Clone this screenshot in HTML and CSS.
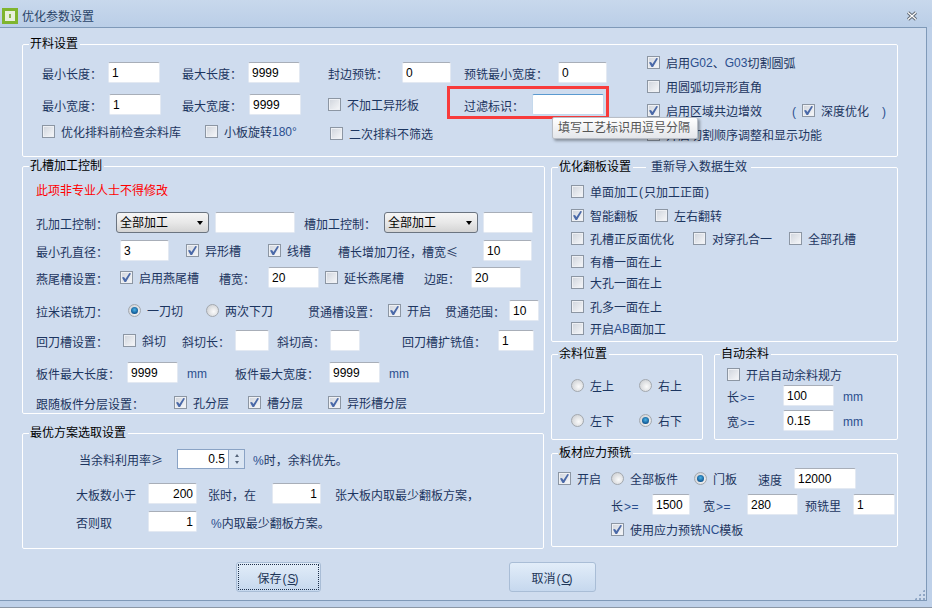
FILE: index.html
```html
<!DOCTYPE html>
<html>
<head>
	<meta charset="utf-8">
	<title>优化参数设置</title>
	<link rel="stylesheet" href="styles.css">
</head>
<body>
	<div class="titlebar">
		<svg class="app-icon" width="16" height="16" viewBox="0 0 16 16">
			<rect width="16" height="16" fill="#7fb52e"/>
			<rect x="3" y="3" width="10" height="10" fill="#e9f1dc"/>
			<rect x="7" y="6" width="2" height="4" fill="#8fb84a"/>
		</svg>
		<span class="title">优化参数设置</span>
		<svg class="close" width="12" height="10" viewBox="0 0 12 10">
			<path d="M2 1.5 L10 8.5 M10 1.5 L2 8.5" stroke="#5f6873" stroke-width="3.2"/>
			<path d="M2 1.5 L10 8.5 M10 1.5 L2 8.5" stroke="#fff" stroke-width="1.2"/>
		</svg>
	</div>

	<div class="main">
		<div class="group g-cut">
			<div class="legend">开料设置</div>
			<div class="cut-left">
				<div class="row cut-1">
					<span>最小长度：</span><input class="w52" value="1">
					<span>最大长度：</span><input class="w52" value="9999">
					<span>封边预铣：</span><input class="w49" value="0">
					<span>预铣最小宽度：</span><input class="w49" value="0">
				</div>
				<div class="row cut-2">
					<span>最小宽度：</span><input class="w52" value="1">
					<span>最大宽度：</span><input class="w52" value="9999">
					<label class="check"><i class="box"></i>不加工异形板</label>
					<span>过滤标识：</span><input class="w72 active">
				</div>
				<div class="row cut-3">
					<label class="check"><i class="box"></i>优化排料前检查余料库</label>
					<label class="check"><i class="box"></i>小板旋转<b class="num">180°</b></label>
					<label class="check nudge"><i class="box"></i>二次排料不筛选</label>
				</div>
			</div>
			<div class="cut-right">
				<div class="row"><label class="check"><i class="box on"></i>启用<b class="num">G02</b>、<b class="num">G03</b>切割圆弧</label></div>
				<div class="row"><label class="check"><i class="box"></i>用圆弧切异形直角</label></div>
				<div class="row cut-deep">
					<label class="check"><i class="box on"></i>启用区域共边增效</label>
					<span class="num">(</span>
					<label class="check"><i class="box on"></i>深度优化</label>
					<span class="num">)</span>
				</div>
				<div class="row"><label class="check"><i class="box"></i>开启切割顺序调整和显示功能</label></div>
			</div>
		</div>

		<div class="columns">
			<div class="col-left">
				<div class="group g-hole">
					<div class="legend">孔槽加工控制</div>
					<div class="row hole-0 warn">此项非专业人士不得修改</div>
					<div class="row hole-1">
						<span>孔加工控制：</span><div class="select w93">全部加工</div><input class="w80">
						<span>槽加工控制：</span><div class="select w94">全部加工</div><input class="w50">
					</div>
					<div class="row hole-2">
						<span>最小孔直径：</span><input class="w49" value="3">
						<label class="check"><i class="box on"></i>异形槽</label>
						<label class="check"><i class="box on"></i>线槽</label>
						<span>槽长增加刀径，槽宽<b class="cjk">≤</b></span><input class="w49" value="10">
					</div>
					<div class="row hole-3">
						<span>燕尾槽设置：</span>
						<label class="check"><i class="box on"></i>启用燕尾槽</label>
						<span>槽宽：</span><input class="w51" value="20">
						<label class="check"><i class="box"></i>延长燕尾槽</label>
						<span>边距：</span><input class="w50" value="20">
					</div>
					<div class="row hole-4">
						<span>拉米诺铣刀：</span>
						<label class="check"><i class="radio on"></i>一刀切</label>
						<label class="check"><i class="radio"></i>两次下刀</label>
						<span>贯通槽设置：</span>
						<label class="check"><i class="box on"></i>开启</label>
						<span>贯通范围：</span><input class="w30" value="10">
					</div>
					<div class="row hole-5">
						<span>回刀槽设置：</span>
						<label class="check"><i class="box"></i>斜切</label>
						<span>斜切长：</span><input class="w34">
						<span>斜切高：</span><input class="w30">
						<span>回刀槽扩铣值：</span><input class="w36" value="1">
					</div>
					<div class="row hole-6">
						<span>板件最大长度：</span><input class="w51" value="9999"><span class="num">mm</span>
						<span>板件最大宽度：</span><input class="w51" value="9999"><span class="num">mm</span>
					</div>
					<div class="row hole-7">
						<span>跟随板件分层设置：</span>
						<label class="check"><i class="box on"></i>孔分层</label>
						<label class="check"><i class="box on"></i>槽分层</label>
						<label class="check"><i class="box on"></i>异形槽分层</label>
					</div>
				</div>

				<div class="group g-best">
					<div class="legend">最优方案选取设置</div>
					<div class="row best-1">
						<span>当余料利用率<b class="cjk">≥</b></span>
						<div class="spin"><input value="0.5"><div class="spin-btn"><i class="up"></i><i class="down"></i></div></div>
						<span><b class="num">%</b>时，余料优先。</span>
					</div>
					<div class="row best-2">
						<span>大板数小于</span><input class="w49 right" value="200">
						<span>张时，在</span><input class="w49 right" value="1">
						<span>张大板内取最少翻板方案，</span>
					</div>
					<div class="row best-3">
						<span>否则取</span><input class="w49 right" value="1">
						<span><b class="num">%</b>内取最少翻板方案。</span>
					</div>
				</div>
			</div>

			<div class="col-right">
				<div class="group g-flip">
					<div class="legend">优化翻板设置</div>
					<div class="legend legend-note">重新导入数据生效</div>
					<div class="row flip-1"><label class="check"><i class="box"></i>单面加工<b class="half">(</b>只加工正面<b class="half">)</b></label></div>
					<div class="row flip-2">
						<label class="check"><i class="box on"></i>智能翻板</label>
						<label class="check"><i class="box"></i>左右翻转</label>
					</div>
					<div class="row flip-3">
						<label class="check"><i class="box"></i>孔槽正反面优化</label>
						<label class="check"><i class="box"></i>对穿孔合一</label>
						<label class="check"><i class="box"></i>全部孔槽</label>
					</div>
					<div class="row flip-4"><label class="check"><i class="box"></i>有槽一面在上</label></div>
					<div class="row flip-5"><label class="check"><i class="box"></i>大孔一面在上</label></div>
					<div class="row flip-6"><label class="check"><i class="box"></i>孔多一面在上</label></div>
					<div class="row flip-7"><label class="check"><i class="box"></i>开启<b class="num">AB</b>面加工</label></div>
				</div>

				<div class="pair">
					<div class="group g-pos">
						<div class="legend">余料位置</div>
						<div class="row pos-1">
							<label class="check"><i class="radio"></i>左上</label>
							<label class="check"><i class="radio"></i>右上</label>
						</div>
						<div class="row pos-2">
							<label class="check"><i class="radio"></i>左下</label>
							<label class="check"><i class="radio on"></i>右下</label>
						</div>
					</div>
					<div class="group g-auto">
						<div class="legend">自动余料</div>
						<div class="row auto-1"><label class="check"><i class="box"></i>开启自动余料规方</label></div>
						<div class="row auto-2">
							<span>长<b class="num ge">&gt;=</b></span><input class="w51" value="100"><span class="num">mm</span>
						</div>
						<div class="row auto-3">
							<span>宽<b class="num ge">&gt;=</b></span><input class="w51" value="0.15"><span class="num">mm</span>
						</div>
					</div>
				</div>

				<div class="group g-stress">
					<div class="legend">板材应力预铣</div>
					<div class="row stress-1">
						<label class="check"><i class="box on"></i>开启</label>
						<label class="check"><i class="radio"></i>全部板件</label>
						<label class="check"><i class="radio on"></i>门板</label>
						<span>速度</span><input class="w62" value="12000">
					</div>
					<div class="row stress-2">
						<span>长<b class="num ge">&gt;=</b></span><input class="w38" value="1500">
						<span>宽<b class="num ge">&gt;=</b></span><input class="w51" value="280">
						<span>预铣里</span><input class="w42" value="1">
					</div>
					<div class="row stress-3"><label class="check"><i class="box on"></i>使用应力预铣<b class="num">NC</b>模板</label></div>
				</div>
			</div>
		</div>

		<div class="footer">
			<button class="focused">保存<b class="half">(</b><b class="half"><u>S</u></b><b class="half">)</b></button>
			<button class="cancel">取消<b class="half">(</b><b class="half"><u>C</u></b><b class="half">)</b></button>
		</div>

		<div class="grip"></div>
	</div>

	<div class="callout"></div>
	<div class="tooltip">填写工艺标识用逗号分隔</div>
</body>
</html>
```

FILE: styles.css
```css
* {
	box-sizing: border-box;
}

html, body {
	margin: 0;
	height: 608px;
	overflow: hidden;
}

body {
	position: relative;
	display: flex;
	flex-direction: column;
	background-color: #bfd1e9;
	border-bottom: 1px solid #8b97a6;
	font-family: "Liberation Sans", "Noto Sans CJK SC", sans-serif;
	font-size: 12px;
	color: #1c3560;
}

b {
	font-weight: normal;
}

/* title bar */
.titlebar {
	display: flex;
	align-items: center;
	height: 27px;
	padding: 4px 14px 0 2px;
	background: linear-gradient(#c8d8ec, #bacee7);
}

.title {
	margin-left: 4px;
	color: #2a4468;
}

.close {
	margin-left: auto;
}

.main {
	position: relative;
	width: 927px;
	height: 574px;
	padding: 16px 0 0 22px;
	background-color: #cfdcee;
	border-top: 1px solid #7f99b8;
	border-right: 1px solid #7f99b8;
	border-bottom: 1px solid #7f99b8;
}

.grip {
	position: absolute;
	right: 1px;
	bottom: 0;
	width: 11px;
	height: 11px;
	background-image: radial-gradient(circle, #8fa6c4 1px, transparent 1.2px);
	background-size: 4px 4px;
	clip-path: polygon(100% 0, 100% 100%, 0 100%);
}

/* groups */
.group {
	position: relative;
	border: 1px solid #fff;
	border-radius: 2px;
}

.legend {
	position: absolute;
	top: -9px;
	left: 6px;
	padding: 0 2px 0 1px;
	line-height: 16px;
	background-color: #cfdcee;
	color: #000;
	white-space: nowrap;
}

.legend-note {
	left: 94px;
	padding: 0 4px 0 5px;
	color: #1c3560;
}

.g-auto .legend {
	left: 5px;
}

.columns {
	display: flex;
	gap: 6px;
	margin-top: 9px;
}

.col-left {
	width: 523px;
}

.col-right {
	width: 347px;
	padding-top: 1px;
}

.pair {
	display: flex;
	gap: 11px;
	margin-top: 12px;
}

.g-cut {
	display: flex;
	width: 876px;
	height: 113px;
	padding-left: 19px;
}

.cut-left {
	width: 605px;
	padding-top: 17px;
}

.cut-right {
	padding-top: 7px;
}

.cut-right .row {
	margin-bottom: 3px;
}

.g-hole {
	height: 248px;
	padding-left: 13px;
}

.g-best {
	width: 522px;
	height: 116px;
	margin-top: 19px;
	padding-left: 53px;
}

.g-flip {
	height: 175px;
	padding-left: 19px;
}

.g-pos {
	width: 152px;
	height: 86px;
	padding-left: 19px;
}

.g-auto {
	width: 184px;
	height: 86px;
	padding-left: 12px;
}

.g-stress {
	height: 94px;
	margin-top: 13px;
	padding-left: 6px;
}

/* rows: every row lists its own column widths */
.row {
	display: grid;
	height: 21px;
	align-items: center;
	white-space: nowrap;
}

.row > span {
	padding-top: 2px;
}

.cut-1 { grid-template-columns: 66px 74px 66px 80px 74px 62px 94px 49px; }
.cut-2 { grid-template-columns: 67px 73px 67px 79px 136px 68px 72px; margin-top: 11px; }
.cut-3 { grid-template-columns: 163px 125px auto; margin-top: 6px; }
.cut-deep { grid-template-columns: 145px 10px 80px auto; }

.hole-0 { margin-top: 12px; }
.hole-1 { grid-template-columns: 80px 99px 89px 80px 99px 50px; margin-top: 12px; }
.hole-2 { grid-template-columns: 84px 66px 82px 70px 145px 49px; margin-top: 7px; }
.hole-3 { grid-template-columns: 84px 99px 49px 57px 99px 47px 50px; margin-top: 6px; }
.hole-4 { grid-template-columns: 92px 78px 102px 80px 57px 64px 30px; margin-top: 12px; }
.hole-5 { grid-template-columns: 87px 59px 53px 42px 53px 72px 96px 36px; margin-top: 9px; }
.hole-6 { grid-template-columns: 91px 60px 48px 94px 60px auto; margin-top: 11px; }
.hole-7 { grid-template-columns: 138px 74px 80px auto; margin-top: 9px; }

.best-1 { grid-template-columns: 98px 76px auto; margin-top: 14px; padding-left: 3px; }
.best-2 { grid-template-columns: 72px 60px 64px 63px auto; margin-top: 14px; }
.best-3 { grid-template-columns: 72px 63px auto; margin-top: 7px; }

.flip-1 { margin-top: 13px; }
.flip-2 { grid-template-columns: 84px auto; margin-top: 3px; }
.flip-3 { grid-template-columns: 122px 96px auto; margin-top: 2px; }
.flip-4 { margin-top: 2px; }
.flip-6 { margin-top: 3px; }
.flip-7 { margin-top: 1px; }

.pos-1 { grid-template-columns: 68px auto; margin-top: 20px; }
.pos-2 { grid-template-columns: 68px auto; margin-top: 14px; }

.auto-1 { margin-top: 9px; }
.auto-2 { grid-template-columns: 56px 60px auto; }
.auto-3 { grid-template-columns: 56px 60px auto; margin-top: 4px; }

.stress-1 { grid-template-columns: 53px 83px 64px 36px 62px; margin-top: 14px; }
.stress-2 { grid-template-columns: 41px 51px 44px 58px 48px 42px; margin-top: 5px; padding-left: 53px; }
.stress-3 { margin-top: 4px; padding-left: 53px; }

.warn {
	color: #f00;
}

.num {
	color: #2b4f8e;
}

.ge {
	margin-left: 1px;
	letter-spacing: 0.5px;
	word-spacing: 0;
}

.cjk {
	font-family: "Noto Sans CJK SC", sans-serif;
}

.half {
	display: inline-block;
	width: 6px;
	text-align: center;
}

.nudge {
	margin-top: 4px;
}

/* inputs */
input {
	display: block;
	height: 21px;
	padding: 0 3px;
	border: 1px solid #e3e9f2;
	border-top-color: #a8aeb8;
	border-radius: 2px;
	background-color: #fff;
	font: inherit;
	color: #000;
	outline: none;
}

input.right {
	text-align: right;
}

input.active {
	border-color: #c5d9ec;
	border-top-color: #5a9ad0;
}

.w30 { width: 30px; }
.w34 { width: 34px; }
.w36 { width: 36px; }
.w38 { width: 38px; }
.w42 { width: 42px; }
.w49 { width: 49px; }
.w50 { width: 50px; }
.w51 { width: 51px; }
.w52 { width: 52px; }
.w62 { width: 62px; }
.w72 { width: 72px; }
.w80 { width: 80px; }
.w93 { width: 93px; }
.w94 { width: 94px; }

.select {
	position: relative;
	height: 21px;
	padding-left: 3px;
	line-height: 20px;
	border: 1px solid #6b7480;
	border-radius: 3px;
	background: linear-gradient(#f6f6f6, #e8e8e8 50%, #d4d4d4);
	color: #000;
}

.select::after {
	content: "";
	position: absolute;
	top: 8px;
	right: 5px;
	border-top: 4px solid #000;
	border-left: 3.5px solid transparent;
	border-right: 3.5px solid transparent;
}

.spin {
	display: flex;
	width: 68px;
	height: 20px;
	border: 1px solid #8aa3c5;
}

.spin input {
	width: 50px;
	height: 18px;
	border: 0;
	border-radius: 0;
	text-align: right;
}

.spin-btn {
	display: flex;
	flex-direction: column;
	align-items: center;
	justify-content: center;
	gap: 4px;
	flex: 1;
	border-left: 1px solid #8aa3c5;
	background-color: #dbe6f3;
}

.up, .down {
	border-left: 2.5px solid transparent;
	border-right: 2.5px solid transparent;
}

.up {
	border-bottom: 3px solid #56657a;
}

.down {
	border-top: 3px solid #56657a;
}

/* check boxes and radio buttons */
.check {
	display: flex;
	align-items: center;
}

.box, .radio {
	position: relative;
	flex: none;
	width: 13px;
	height: 13px;
	margin-right: 6px;
}

.box {
	border: 1px solid #8c96a3;
	background: linear-gradient(135deg, #cfd4dc, #f7f8fa);
	box-shadow: inset 0 0 0 1px #eef0f4;
}

.box.on::after {
	content: "";
	position: absolute;
	inset: 1px;
	background-color: #4a69a8;
	clip-path: polygon(0 50%, 22% 45%, 38% 68%, 82% 0, 100% 5%, 45% 100%, 28% 100%);
}

.radio {
	border-radius: 50%;
	border: 1px solid #a3a8ae;
	background: radial-gradient(circle at 60% 60%, #fbfbfb, #d5d7da 70%, #bcc0c5);
}

.radio.on::after {
	content: "";
	position: absolute;
	inset: 2px;
	border-radius: 50%;
	background: radial-gradient(circle at 50% 40%, #4cb3e6, #0a4f8c 75%);
}

/* buttons */
.footer {
	display: flex;
	margin-top: 13px;
	padding-left: 214px;
}

button {
	width: 85px;
	height: 30px;
	padding: 0;
	border: 1px solid #a9bdd6;
	border-radius: 3px;
	background: linear-gradient(#e2edf9, #c6d8ee);
	font: inherit;
	color: #1d3557;
}

.focused {
	outline: 1px dotted #1d2f4a;
	outline-offset: -3px;
}

.cancel {
	width: 87px;
	margin-left: 188px;
}

/* things lying over the form */
.callout {
	position: absolute;
	top: 86px;
	left: 447px;
	width: 162px;
	height: 33px;
	border: 3px solid #f83b3b;
}

.tooltip {
	position: absolute;
	top: 117px;
	left: 552px;
	width: 146px;
	height: 22px;
	padding-left: 5px;
	line-height: 20px;
	border: 1px solid #b9bec6;
	border-radius: 2px;
	background: linear-gradient(#fff, #e4e6ea);
	box-shadow: 2px 2px 3px rgba(0, 0, 0, 0.35);
	color: #555;
}
```
